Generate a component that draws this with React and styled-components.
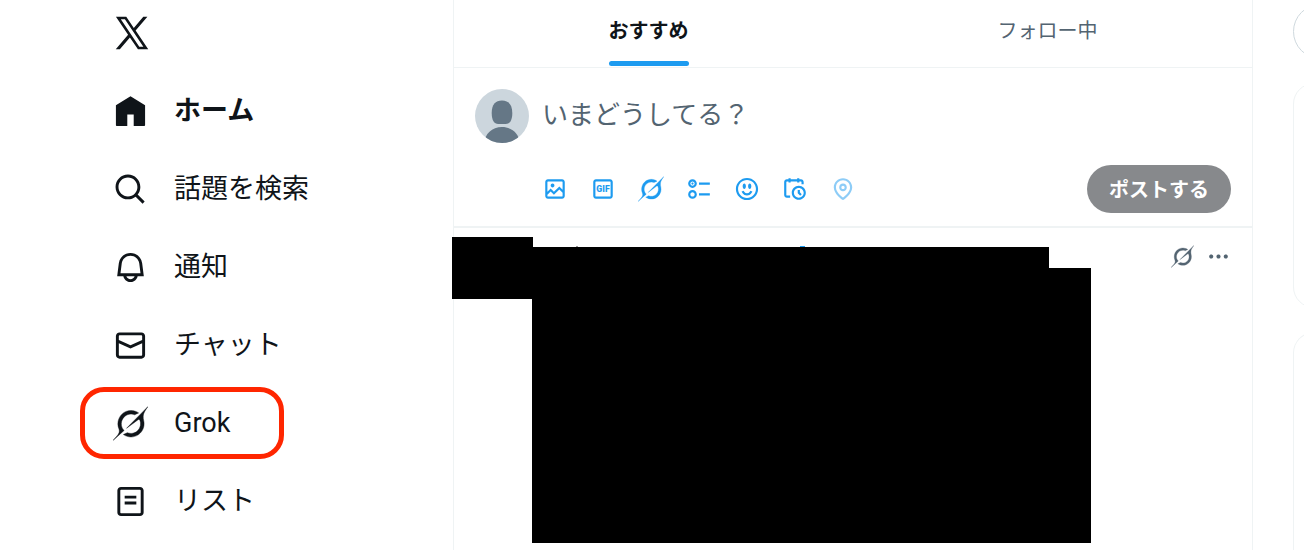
import React from "react";
import styled, { createGlobalStyle, css } from "styled-components";

const ink = "#0f1419";
const muted = "#536471";
const blue = "#1d9bf0";
const line = "#eff3f4";

const GlobalStyle = createGlobalStyle`
  *, *::before, *::after { box-sizing: border-box; }
  body {
    margin: 0;
    background: #fff;
    color: ${ink};
    font-family: Roboto, "Noto Sans CJK JP", sans-serif;
    overflow-x: hidden;
  }
  ul { margin: 0; padding: 0; list-style: none; }
  button, input { font-family: inherit; }
`;

const Page = styled.div`
  display: grid;
  grid-template-columns: minmax(0, 453fr) minmax(0, 800fr) minmax(0, 51fr);
  min-height: 100vh;
`;

const Icon = styled.svg`
  display: block;
  flex: none;
  width: ${(p) => p.$size}px;
  height: ${(p) => p.$size}px;
  fill: currentColor;
`;

/* Navigation */
const Side = styled.header`
  padding: 13px 0 0 80px;
`;

const Logo = styled.a`
  display: block;
  width: 40px;
  margin: 0 0 22px 32px;
  color: ${ink};
`;

const NavList = styled.ul`
  display: flex;
  flex-direction: column;
  align-items: flex-start;
  gap: 6px;
`;

const NavLink = styled.a`
  display: flex;
  align-items: center;
  gap: 26px;
  height: 72px;
  padding: 0 49px 0 28px;
  border: 5px solid ${(p) => (p.$marked ? "#ff2600" : "transparent")};
  border-radius: 24px;
  color: ${ink};
  font-size: 27px;
  line-height: 36px;
  font-weight: ${(p) => (p.$current ? 700 : 400)};
  white-space: nowrap;
  text-decoration: none;
`;

/* Timeline */
const Feed = styled.main`
  border-left: 1px solid ${line};
  border-right: 1px solid ${line};
`;

const Tabs = styled.nav`
  display: flex;
  height: 68px;
  border-bottom: 1px solid ${line};
`;

const Tab = styled.a`
  flex: 1;
  display: flex;
  justify-content: center;
  padding: 17px 10px 0 0;
  color: ${(p) => (p.$active ? ink : muted)};
  font-size: 20px;
  line-height: 28px;
  font-weight: ${(p) => (p.$active ? 700 : 400)};
  text-decoration: none;
`;

const TabLabel = styled.span`
  position: relative;
  height: 49px;
  ${(p) =>
    p.$active &&
    css`
      &::after {
        content: "";
        position: absolute;
        left: 0;
        right: 0;
        bottom: 0;
        height: 5px;
        border-radius: 3px;
        background: ${blue};
      }
    `}
`;

const Composer = styled.form`
  display: flex;
  gap: 13px;
  padding: 21px 21px 13px;
  border-bottom: 2px solid ${line};
`;

const Avatar = styled.svg`
  flex: none;
  width: 54px;
  height: 54px;
`;

const ComposerBody = styled.div`
  flex: 1;
  min-width: 0;
`;

const Prompt = styled.input`
  display: block;
  width: 100%;
  height: 52px;
  padding: 0;
  border: 0;
  outline: 0;
  background: none;
  color: ${ink};
  font-size: 26px;
  &::placeholder { color: ${muted}; opacity: 1; }
`;

const ComposerBar = styled.div`
  display: flex;
  align-items: center;
  justify-content: space-between;
  margin-top: 24px;
`;

const Tools = styled.div`
  display: flex;
  gap: 22px;
`;

const IconButton = styled.button`
  padding: 0;
  border: 0;
  background: none;
  color: ${(p) => (p.$muted ? muted : blue)};
  opacity: ${(p) => (p.disabled ? 0.5 : 1)};
`;

const PostButton = styled.button`
  height: 48px;
  padding: 0 22px 2px;
  border: 0;
  border-radius: 24px;
  background: #87898c;
  color: #fff;
  font-size: 20px;
  font-weight: 700;
  white-space: nowrap;
`;

const Post = styled.article`
  display: flex;
  align-items: flex-start;
  padding-top: 9px;
`;

const HiddenAvatar = styled.div`
  flex: none;
  width: 81px;
  height: 62px;
  margin-left: -2px;
  background: #000;
`;

const HiddenContent = styled.div`
  flex: 0 1 559px;
  margin: 9px 0 0 -1px;
`;

const PeekRow = styled.div`
  display: flex;
  gap: 222px;
  height: 1px;
  padding-left: 44px;
`;

const Peek = styled.span`
  width: ${(p) => p.$width}px;
  background: ${(p) => p.$color};
`;

const HiddenName = styled.div`
  width: 517px;
  max-width: 100%;
  height: 21px;
  background: #000;
`;

const HiddenText = styled.div`
  height: 275px;
  background: #000;
`;

const PostActions = styled.div`
  display: flex;
  align-items: center;
  gap: 12px;
  margin-left: auto;
  padding: 7px 21px 0 0;
`;

/* Right column */
const Rail = styled.aside`
  display: flex;
  flex-direction: column;
  gap: 24px;
  padding: 4px 0 0 40px;
  overflow: hidden;
`;

const SearchBox = styled.input`
  width: 466px;
  height: 55px;
  padding: 0 60px;
  border: 1px solid #cfd9de;
  border-radius: 28px;
  background: #fff;
`;

const Card = styled.section`
  width: 466px;
  height: 225px;
  border: 1px solid ${line};
  border-radius: 21px;
  ${(p) =>
    p.$open &&
    css`
      flex: 1;
      height: auto;
      border-bottom: 0;
      border-radius: 21px 21px 0 0;
    `}
`;

const paths = {
  x: "M21.742 21.75l-7.563-11.179 7.056-8.321h-2.456l-5.691 6.714-4.54-6.714H2.359l7.29 10.776L2.25 21.75h2.456l6.035-7.118 4.818 7.118h6.191-.008zM7.739 3.818L18.81 20.182h-2.447L5.29 3.818h2.447z",
  home: "M12 1.5L2 7.7V21.2c0 .5.3.8.8.8H9.8v-8h4.4v8h7c.5 0 .8-.3.8-.8V7.7L12 1.5z",
  search:
    "M10.25 3.75c-3.59 0-6.5 2.91-6.5 6.5s2.91 6.5 6.5 6.5c1.795 0 3.419-.726 4.596-1.904 1.178-1.177 1.904-2.801 1.904-4.596 0-3.59-2.91-6.5-6.5-6.5zm-8.5 6.5c0-4.694 3.806-8.5 8.5-8.5s8.5 3.806 8.5 8.5c0 1.986-.682 3.815-1.824 5.262l4.781 4.781-1.414 1.414-4.781-4.781c-1.447 1.142-3.276 1.824-5.262 1.824-4.694 0-8.5-3.806-8.5-8.5z",
  bell: "M19.993 9.042C19.48 5.017 16.054 2 11.996 2s-7.49 3.021-7.999 7.051L2.866 18H7.1c.463 2.282 2.481 4 4.9 4s4.437-1.718 4.9-4h4.236l-1.143-8.958zM12 20c-1.306 0-2.417-.835-2.829-2h5.658c-.412 1.165-1.523 2-2.829 2zm-6.866-4l.847-6.698C6.364 6.272 8.941 4 11.996 4s5.627 2.268 6.013 5.295L18.864 16H5.134z",
  mail: "M1.998 5.5c0-1.381 1.119-2.5 2.5-2.5h15c1.381 0 2.5 1.119 2.5 2.5v13c0 1.381-1.119 2.5-2.5 2.5h-15c-1.381 0-2.5-1.119-2.5-2.5v-13zm2.5-.5c-.276 0-.5.224-.5.5v2.764l8 3.638 8-3.636V5.5c0-.276-.224-.5-.5-.5h-15zm15.5 5.463l-8 3.636-8-3.638V18.5c0 .276.224.5.5.5h15c.276 0 .5-.224.5-.5v-8.037z",
  list: "M3 4.5C3 3.12 4.12 2 5.5 2h13C19.88 2 21 3.12 21 4.5v15c0 1.38-1.12 2.5-2.5 2.5h-13C4.12 22 3 20.88 3 19.5v-15zM5.5 4c-.28 0-.5.22-.5.5v15c0 .28.22.5.5.5h13c.28 0 .5-.22.5-.5v-15c0-.28-.22-.5-.5-.5h-13zM16 10H8V8h8v2zm-8 2h8v2H8v-2z",
  grok: "M12.745 20.54l10.97-8.19c.539-.4 1.307-.244 1.564.38 1.349 3.288.746 7.241-1.938 9.955-2.683 2.714-6.417 3.31-9.83 1.954l-3.728 1.745c5.347 3.697 11.84 2.782 15.898-1.324 3.219-3.255 4.216-7.692 3.284-11.693l.008.009c-1.351-5.878.332-8.227 3.782-13.031L33 0l-4.54 4.59v-.014L12.743 20.544m-2.263 1.987c-3.837-3.707-3.175-9.446.1-12.755 2.42-2.449 6.388-3.448 9.852-1.979l3.72-1.737c-.67-.49-1.53-1.017-2.515-1.387-4.455-1.854-9.789-.931-13.41 2.728-3.483 3.523-4.579 8.94-2.697 13.561 1.405 3.454-.899 5.898-3.22 8.364C1.49 30.2.666 31.074 0 32l10.478-9.466",
  image:
    "M3 5.5C3 4.119 4.119 3 5.5 3h13C19.881 3 21 4.119 21 5.5v13c0 1.381-1.119 2.5-2.5 2.5h-13C4.119 21 3 19.881 3 18.5v-13zM5.5 5c-.276 0-.5.224-.5.5v9.086l3-3 3 3 5-5 3 3V5.5c0-.276-.224-.5-.5-.5h-13zM19 15.414l-3-3-5 5-3-3-3 3V18.5c0 .276.224.5.5.5h13c.276 0 .5-.224.5-.5v-3.086zM9.75 7C8.784 7 8 7.784 8 8.75s.784 1.75 1.75 1.75 1.75-.784 1.75-1.75S10.716 7 9.75 7z",
  frame:
    "M3 5.5C3 4.119 4.12 3 5.5 3h13C19.88 3 21 4.119 21 5.5v13c0 1.381-1.12 2.5-2.5 2.5h-13C4.12 21 3 19.881 3 18.5v-13zM5.5 5c-.28 0-.5.224-.5.5v13c0 .276.22.5.5.5h13c.28 0 .5-.224.5-.5v-13c0-.276-.22-.5-.5-.5h-13z",
  poll: "M6 5c-1.1 0-2 .895-2 2s.9 2 2 2 2-.895 2-2-.9-2-2-2zM2 7c0-2.209 1.79-4 4-4s4 1.791 4 4-1.79 4-4 4-4-1.791-4-4zm20 1H12V6h10v2zM6 15c-1.1 0-2 .895-2 2s.9 2 2 2 2-.895 2-2-.9-2-2-2zm-4 2c0-2.209 1.79-4 4-4s4 1.791 4 4-1.79 4-4 4-4-1.791-4-4zm20 1H12v-2h10v2zM7 7c0 .552-.45 1-1 1s-1-.448-1-1 .45-1 1-1 1 .448 1 1z",
  emoji:
    "M8 9.5C8 8.119 8.672 7 9.5 7S11 8.119 11 9.5 10.328 12 9.5 12 8 10.881 8 9.5zm6.5 2.5c.828 0 1.5-1.119 1.5-2.5S15.328 7 14.5 7 13 8.119 13 9.5s.672 2.5 1.5 2.5zM12 16c-2.224 0-3.021-2.227-3.051-2.316l-1.897.633c.05.15 1.271 3.684 4.949 3.684s4.898-3.533 4.949-3.684l-1.896-.638c-.033.095-.83 2.322-3.053 2.322zm10.25-4.001c0 5.652-4.598 10.25-10.25 10.25S1.75 17.652 1.75 12 6.348 1.75 12 1.75 22.25 6.348 22.25 12zm-2 0c0-4.549-3.701-8.25-8.25-8.25S3.75 7.451 3.75 12s3.701 8.25 8.25 8.25 8.25-3.701 8.25-8.25z",
  schedule:
    "M6 3V2h2v1h6V2h2v1h1.5C18.88 3 20 4.119 20 5.5v2h-2v-2c0-.276-.22-.5-.5-.5H16v1h-2V5H8v1H6V5H4.5c-.28 0-.5.224-.5.5v12c0 .276.22.5.5.5h3v2h-3C3.12 20 2 18.881 2 17.5v-12C2 4.119 3.12 3 4.5 3H6zm9.5 8c-2.49 0-4.5 2.015-4.5 4.5s2.01 4.5 4.5 4.5 4.5-2.015 4.5-4.5-2.01-4.5-4.5-4.5zM9 15.5C9 11.91 11.91 9 15.5 9s6.5 2.91 6.5 6.5-2.91 6.5-6.5 6.5S9 19.09 9 15.5zm5.5-2.5h2v2.086l1.71 1.707-1.42 1.414-2.29-2.293V13z",
  pin: "M12 7c-1.93 0-3.5 1.57-3.5 3.5S10.07 14 12 14s3.5-1.57 3.5-3.5S13.93 7 12 7zm0 5c-.827 0-1.5-.673-1.5-1.5S11.173 9 12 9s1.5.673 1.5 1.5S12.827 12 12 12zm0-10c-4.687 0-8.5 3.813-8.5 8.5 0 5.967 7.621 11.116 7.945 11.332l.555.37.555-.37c.324-.216 7.945-5.365 7.945-11.332C20.5 5.813 16.687 2 12 2zm0 17.77c-1.665-1.241-6.5-5.196-6.5-9.27C5.5 6.916 8.416 4 12 4s6.5 2.916 6.5 6.5c0 4.073-4.835 8.028-6.5 9.27z",
  more: "M3 12c0-1.1.9-2 2-2s2 .9 2 2-.9 2-2 2-2-.9-2-2zm9 2c1.1 0 2-.9 2-2s-.9-2-2-2-2 .9-2 2 .9 2 2 2zm7 0c1.1 0 2-.9 2-2s-.9-2-2-2-2 .9-2 2 .9 2 2 2z",
};

function Glyph({ name, size }) {
  if (name === "grok") {
    return (
      <Icon $size={size} viewBox="0 0 33 32" aria-hidden="true">
        <path d={paths.grok} stroke="currentColor" strokeWidth="0.4" />
      </Icon>
    );
  }
  return (
    <Icon $size={size} viewBox="0 0 24 24" aria-hidden="true">
      <path d={paths[name]} />
    </Icon>
  );
}

function GifGlyph({ size }) {
  return (
    <Icon $size={size} viewBox="0 0 24 24" aria-hidden="true">
      <path d={paths.frame} />
      <text x="12" y="15" textAnchor="middle" fontFamily="Roboto, sans-serif" fontSize="8" fontWeight="900">
        GIF
      </text>
    </Icon>
  );
}

const navItems = [
  { icon: "home", label: "ホーム", current: true },
  { icon: "search", label: "話題を検索" },
  { icon: "bell", label: "通知" },
  { icon: "mail", label: "チャット" },
  { icon: "grok", label: "Grok", marked: true },
  { icon: "list", label: "リスト" },
];

const tools = [
  { icon: "image", label: "画像" },
  { icon: "gif", label: "GIF" },
  { icon: "grok", label: "Grok" },
  { icon: "poll", label: "投票" },
  { icon: "emoji", label: "絵文字" },
  { icon: "schedule", label: "予約" },
  { icon: "pin", label: "位置情報", disabled: true },
];

export default function App() {
  return (
    <>
      <GlobalStyle />
      <Page>
        <Side>
          <Logo href="#" aria-label="X">
            <Glyph name="x" size={40} />
          </Logo>
          <nav>
            <NavList>
              {navItems.map((item) => (
                <li key={item.icon}>
                  <NavLink href="#" $current={item.current} $marked={item.marked}>
                    <Glyph name={item.icon} size={35} />
                    {item.label}
                  </NavLink>
                </li>
              ))}
            </NavList>
          </nav>
        </Side>

        <Feed>
          <Tabs>
            <Tab href="#" $active>
              <TabLabel $active>おすすめ</TabLabel>
            </Tab>
            <Tab href="#">
              <TabLabel>フォロー中</TabLabel>
            </Tab>
          </Tabs>

          <Composer onSubmit={(e) => e.preventDefault()}>
            <Avatar viewBox="0 0 54 54" aria-hidden="true">
              <clipPath id="avatar-disc">
                <circle cx="27" cy="27" r="27" />
              </clipPath>
              <g clipPath="url(#avatar-disc)">
                <rect width="54" height="54" fill="#ccd6dd" />
                <path
                  d="M27 11.500c6.500 0 10.300 4 10.300 12.500 0 7.300-2.500 11-6.500 11h-7.600c-4 0-6.500-3.700-6.500-11 0-8.500 3.800-12.500 10.300-12.500z"
                  fill="#657786"
                />
                <path d="M9.500 54c0-9 7.500-16 17.500-16s17.500 7 17.500 16z" fill="#657786" />
              </g>
            </Avatar>
            <ComposerBody>
              <Prompt type="text" aria-label="ポスト本文" placeholder="いまどうしてる？" />
              <ComposerBar>
                <Tools>
                  {tools.map((tool) => (
                    <IconButton key={tool.icon} type="button" aria-label={tool.label} disabled={tool.disabled}>
                      {tool.icon === "gif" ? <GifGlyph size={26} /> : <Glyph name={tool.icon} size={26} />}
                    </IconButton>
                  ))}
                </Tools>
                <PostButton type="submit">ポストする</PostButton>
              </ComposerBar>
            </ComposerBody>
          </Composer>

          <Post>
            <HiddenAvatar />
            <HiddenContent>
              <PeekRow>
                <Peek $width={2} $color="#999" />
                <Peek $width={5} $color={blue} />
              </PeekRow>
              <HiddenName />
              <HiddenText />
            </HiddenContent>
            <PostActions>
              <IconButton type="button" aria-label="Grok" $muted>
                <Glyph name="grok" size={23} />
              </IconButton>
              <IconButton type="button" aria-label="もっと見る" $muted>
                <Glyph name="more" size={25} />
              </IconButton>
            </PostActions>
          </Post>
        </Feed>

        <Rail>
          <SearchBox type="search" aria-label="検索" />
          <Card />
          <Card $open />
        </Rail>
      </Page>
    </>
  );
}
